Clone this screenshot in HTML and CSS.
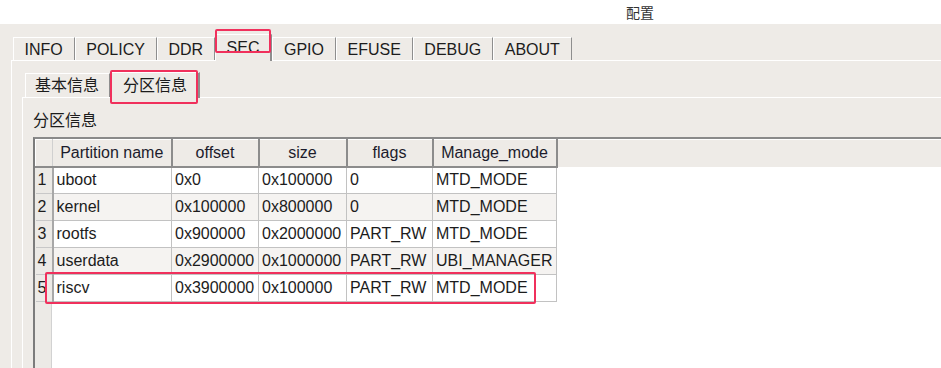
FILE: index.html
```html
<!DOCTYPE html>
<html lang="zh">
<head>
    <meta charset="UTF-8">
    <title>配置</title>
    <link rel="stylesheet" href="styles.css">
</head>
<body>
<div class="titlebar">配置</div>
<div class="notebook">
    <ul class="tabs">
        <li class="tab">INFO</li>
        <li class="tab">POLICY</li>
        <li class="tab">DDR</li>
        <li class="tab active">SEC</li>
        <li class="tab">GPIO</li>
        <li class="tab">EFUSE</li>
        <li class="tab">DEBUG</li>
        <li class="tab">ABOUT</li>
    </ul>
    <div class="panel">
        <ul class="tabs sub">
            <li class="tab">基本信息</li>
            <li class="tab active">分区信息</li>
        </ul>
        <div class="subpanel">
            <div class="caption">分区信息</div>
            <div class="grid">
                <table class="parts">
                    <colgroup>
                        <col class="c-num">
                        <col class="c-name">
                        <col class="c-offset">
                        <col class="c-size">
                        <col class="c-flags">
                        <col class="c-mode">
                        <col>
                    </colgroup>
                    <thead>
                    <tr>
                        <th class="corner"></th>
                        <th>Partition name</th>
                        <th>offset</th>
                        <th>size</th>
                        <th>flags</th>
                        <th>Manage_mode</th>
                        <th class="fill"></th>
                    </tr>
                    </thead>
                    <tbody>
                    <tr>
                        <td class="num">1</td><td>uboot</td><td>0x0</td><td>0x100000</td><td>0</td><td>MTD_MODE</td><td class="fill"></td>
                    </tr>
                    <tr class="alt">
                        <td class="num">2</td><td>kernel</td><td>0x100000</td><td>0x800000</td><td>0</td><td>MTD_MODE</td><td class="fill"></td>
                    </tr>
                    <tr>
                        <td class="num">3</td><td>rootfs</td><td>0x900000</td><td>0x2000000</td><td>PART_RW</td><td>MTD_MODE</td><td class="fill"></td>
                    </tr>
                    <tr class="alt">
                        <td class="num">4</td><td>userdata</td><td>0x2900000</td><td>0x1000000</td><td>PART_RW</td><td>UBI_MANAGER</td><td class="fill"></td>
                    </tr>
                    <tr>
                        <td class="num">5</td><td>riscv</td><td>0x3900000</td><td>0x100000</td><td>PART_RW</td><td>MTD_MODE</td><td class="fill"></td>
                    </tr>
                    </tbody>
                </table>
            </div>
        </div>
    </div>
</div>
<!-- red annotation boxes drawn over the screenshot -->
<div class="mark mark-sec"></div>
<div class="mark mark-subtab"></div>
<div class="mark mark-row"></div>
</body>
</html>
```

FILE: styles.css
```css
*{
    margin: 0;
    padding: 0;
    box-sizing: border-box;
}
ul{
    list-style: none;
}
html,body{
    width: 941px;
    height: 368px;
    overflow: hidden;
}
body{
    background: #eeebe7;
    font-family: "Liberation Sans", "Noto Sans CJK SC", sans-serif;
    font-size: 16px;
    color: #1c1c1c;
    display: flex;
    flex-direction: column;
    position: relative;
}
.titlebar{
    height: 24px;
    background: #fff;
    font-size: 14px;
    line-height: 26px;
    padding-left: 626px;
    color: #333;
}
.notebook{
    flex: 1;
    display: flex;
    flex-direction: column;
    padding: 13px 0 0 11px;
}
.tabs{
    display: flex;
    align-items: flex-end;
    height: 23px;
    padding-left: 2px;
}
.tab{
    height: 23px;
    line-height: 23px;
    padding: 0 11px 0 10.5px;
    border-top: 1px solid #fff;
    border-left: 1px solid #fff;
    border-right: 1px solid #8e8e8e;
}
.tab.active{
    height: 27px;
    line-height: 26px;
    margin-bottom: -1px;
    position: relative;
    background: #eeebe7;
    border-right-width: 2px;
}
.panel{
    flex: 1;
    display: flex;
    flex-direction: column;
    border-top: 1px solid #fff;
    border-left: 1px solid #fff;
    padding: 12px 0 0 10px;
}
.tabs.sub{
    padding-left: 3px;
    height: 24px;
}
.tabs.sub .tab{
    height: 24px;
    line-height: 23px;
    padding: 0 10px 0 9px;
}
.tabs.sub .tab.active{
    height: 26px;
    line-height: 25px;
    padding: 0 11px 0 12px;
}
.subpanel{
    flex: 1;
    display: flex;
    flex-direction: column;
    border-top: 1px solid #fff;
    border-left: 1px solid #fff;
    padding: 12px 0 0 10px;
}
.caption{
    line-height: 22px;
    height: 27px;
}
.grid{
    flex: 1;
    border-top: 2px solid #8a8a8a;
    border-left: 2px solid #7c7c7c;
    background: linear-gradient(to right, #eceae6 16px, #d2d2d2 16px, #d2d2d2 17px, #fff 17px);
}
.parts{
    width: 100%;
    table-layout: fixed;
    border-collapse: collapse;
}
.parts .c-num{ width: 17px; }
.parts .c-name{ width: 119px; }
.parts .c-offset{ width: 87px; }
.parts .c-size{ width: 88px; }
.parts .c-flags{ width: 86px; }
.parts .c-mode{ width: 124px; }
.parts th{
    height: 27px;
    font-weight: normal;
    background: #eeebe7;
    color: #1c1c2c;
    border-left: 1px solid #fff;
    border-top: 1px solid #fff;
    border-right: 2px solid #8c8c8c;
    border-bottom: 2px solid #8c8c8c;
    white-space: nowrap;
}
.parts th.corner{
    border-right: 1px solid #d0d0d0;
}
.parts th.fill{
    border: none;
}
.parts td{
    height: 27px;
    padding: 0 3px;
    background: #fff;
    border-right: 1px solid #c2c2c2;
    border-bottom: 1px solid #c2c2c2;
    white-space: nowrap;
    overflow: hidden;
}
.parts tr.alt td{
    background: #f5f3f1;
}
.parts td.num{
    padding: 0 0 0 2px;
    background: #eceae6;
    border-right: 2px solid #a8a8a8;
    border-bottom: 1px solid #c8c8c8;
}
.parts tr.alt td.num{
    background: #eceae6;
}
.parts td.fill,
.parts tr.alt td.fill{
    background: #fff;
    border: none;
}
.mark{
    position: absolute;
    border: 2px solid #f0305c;
    border-radius: 2px;
}
.mark-sec{
    left: 215px;
    top: 29px;
    width: 56px;
    height: 24px;
}
.mark-subtab{
    left: 110px;
    top: 70px;
    width: 88px;
    height: 34px;
}
.mark-row{
    left: 45px;
    top: 272px;
    width: 491px;
    height: 32px;
}
```
